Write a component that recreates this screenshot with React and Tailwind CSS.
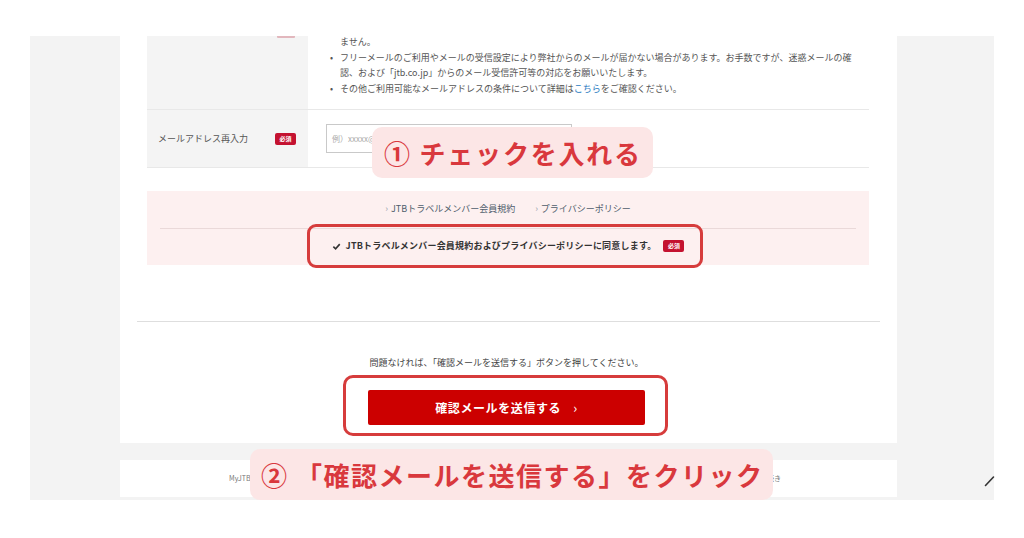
import React from "react";

const jp = { fontFamily: '"Noto Sans CJK JP", "Noto Sans", sans-serif' };

function Badge() {
  return (
    <span className="inline-flex items-center justify-center w-[21px] h-[12px] rounded-[2px] bg-[#c41230] text-white text-[6px] leading-none font-bold">
      必須
    </span>
  );
}

export default function App() {
  return (
    <div className="relative w-[1024px] h-[538px] bg-white overflow-hidden text-[#555]" style={jp}>
      {/* grey canvas */}
      <div className="ml-[30px] mt-[36px] w-[964px] h-[464px] bg-[#f3f3f3] pl-[90px] flex flex-col">
        {/* main white panel */}
        <div className="w-[777px] h-[407px] bg-white overflow-hidden flex flex-col">
          <div className="ml-[27px] w-[722px] flex flex-col">
            {/* row 1 (partial) */}
            <div className="flex h-[74px] border-b border-[#e8e8e8]">
              <div className="relative w-[161px] bg-[#f4f4f4]">
                <div className="absolute left-[130px] top-0 w-[18px] h-[2px] bg-[#e2b7bd] rounded-b-[1px]" />
              </div>
              <div className="flex-1 pl-[22px] text-[9px] leading-[15.5px] text-[#555]">
                <div className="-mt-[2px] pl-[10px] whitespace-nowrap">ません。</div>
                <div className="flex whitespace-nowrap">
                  <span className="w-[10px]">•</span>
                  <div>
                    <div>フリーメールのご利用やメールの受信設定により弊社からのメールが届かない場合があります。お手数ですが、迷惑メールの確</div>
                    <div>認、および「jtb.co.jp」からのメール受信許可等の対応をお願いいたします。</div>
                  </div>
                </div>
                <div className="flex whitespace-nowrap">
                  <span className="w-[10px]">•</span>
                  <div>
                    その他ご利用可能なメールアドレスの条件について詳細は<span className="text-[#2a7bbf]">こちら</span>をご確認ください。
                  </div>
                </div>
              </div>
            </div>
            {/* row 2 */}
            <div className="flex h-[58px] border-b border-[#e8e8e8]">
              <div className="w-[161px] bg-[#f4f4f4] flex items-center justify-between pl-[11px] pr-[12px]">
                <span className="text-[9px] text-[#555] whitespace-nowrap">メールアドレス再入力</span>
                <Badge />
              </div>
              <div className="flex-1 pl-[18px] flex items-center">
                <div className="w-[246px] h-[29px] border border-[#c9c9c9] flex items-center pl-[5px] text-[8px] text-[#aaa] whitespace-nowrap">
                  例）xxxxx@xxxxx.co.jp
                </div>
              </div>
            </div>
            {/* agreement */}
            <div className="mt-[23px] h-[74px] bg-[#fdf0f0] flex flex-col">
              <div className="mt-[11px] h-[14px] flex justify-center gap-[20px] text-[9px] leading-[14px] text-[#4f5d6c] whitespace-nowrap">
                <span><span className="text-[#9aa3ad] mr-[3px]">›</span>JTBトラベルメンバー会員規約</span>
                <span><span className="text-[#9aa3ad] mr-[3px]">›</span>プライバシーポリシー</span>
              </div>
              <div className="mt-[12px] mx-[13px] h-px bg-[#ead9d9]" />
              <div className="mt-[10px] h-[14px] flex items-center justify-center gap-[4px] whitespace-nowrap">
                <svg width="9" height="9" viewBox="0 0 10 10" className="mr-[1px]">
                  <path d="M1.5 5.2 L4 7.6 L8.6 2.4" fill="none" stroke="#333" strokeWidth="1.8" />
                </svg>
                <span className="text-[9px] font-bold text-[#333] tracking-[0.2px]">
                  JTBトラベルメンバー会員規約およびプライバシーポリシーに同意します。
                </span>
                <span className="ml-[3px] flex"><Badge /></span>
              </div>
            </div>
          </div>
          {/* divider */}
          <div className="mt-[56px] ml-[17px] w-[743px] h-px bg-[#dedede]" />
          <div className="mt-[34px] pl-[248px] w-[525px] text-center text-[9px] leading-[14px] text-[#444] whitespace-nowrap">
            問題なければ、「確認メールを送信する」ボタンを押してください。
          </div>
          <div className="mt-[20px] pl-[248px]">
            <div className="w-[277px] h-[35px] bg-[#cc0000] rounded-[2px] flex items-center justify-center gap-[12px] text-white text-[12px] font-bold tracking-[0.6px]">
              <span>確認メールを送信する</span>
              <span className="font-normal text-[13px]">›</span>
            </div>
          </div>
        </div>
        {/* footer strip */}
        <div className="mt-[17px] w-[777px] h-[37px] bg-white flex items-center justify-between pl-[109px] pr-[116px] text-[7px] text-[#777] whitespace-nowrap">
          <span>MyJTB会員規約</span>
          <span>個人情報の取扱い</span>
          <span>ご利用にあたって</span>
          <span>退会手続き</span>
        </div>
      </div>

      {/* resize handle mark */}
      <svg className="absolute left-[984px] top-[475px]" width="11" height="12" viewBox="0 0 11 12">
        <path d="M1.5 10.5 L9.5 2" stroke="#333" strokeWidth="1.6" strokeLinecap="round" />
      </svg>

      {/* annotation outlines */}
      <div className="absolute left-[307px] top-[224px] w-[396px] h-[44px] border-[3px] border-[#d63c3c] rounded-[9px]" />
      <div className="absolute left-[343px] top-[375px] w-[325px] h-[61px] border-[3px] border-[#d63c3c] rounded-[10px]" />

      {/* annotation bubbles */}
      <div className="absolute left-[372px] top-[127px] w-[281px] h-[51px] rounded-[10px] bg-[#fce6e6] flex items-center pl-[12px] text-[26px] font-bold text-[#d9383d] tracking-[1.8px] whitespace-nowrap leading-none">
        ①&nbsp;チェックを入れる
      </div>
      <div className="absolute left-[250px] top-[449px] w-[523px] h-[51px] rounded-[10px] bg-[#fce6e6] flex items-center pl-[11px] text-[26px] font-bold text-[#d9383d] tracking-[1.5px] whitespace-nowrap leading-none">
        ②&nbsp;「確認メールを送信する」をクリック
      </div>
    </div>
  );
}
